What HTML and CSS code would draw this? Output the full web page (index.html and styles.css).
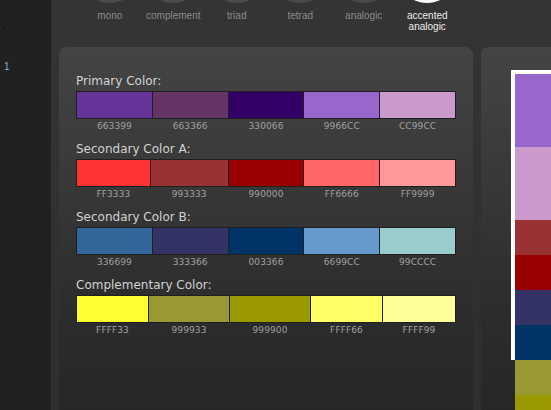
FILE: index.html
```html
<!DOCTYPE html>
<html>
<head>
<meta charset="utf-8">
<link rel="stylesheet" href="styles.css">
</head>
<body>
<div class="app">
  <aside class="sidebar">
    <span class="dot">.</span>
    <span class="num">1</span>
  </aside>
  <main class="main">
    <nav class="modes">
      <div class="mode"><span class="circle"></span><span class="mlabel">mono</span></div>
      <div class="mode"><span class="circle"></span><span class="mlabel">complement</span></div>
      <div class="mode"><span class="circle"></span><span class="mlabel">triad</span></div>
      <div class="mode"><span class="circle"></span><span class="mlabel">tetrad</span></div>
      <div class="mode"><span class="circle"></span><span class="mlabel">analogic</span></div>
      <div class="mode active"><span class="circle"></span><span class="mlabel">accented<br>analogic</span></div>
    </nav>
    <div class="panels">
      <section class="panel scheme">
        <div class="group">
          <h3 class="glabel">Primary Color:</h3>
          <div class="swatches even">
            <span class="sw" style="background:#663399"></span>
            <span class="sw" style="background:#663366"></span>
            <span class="sw" style="background:#330066"></span>
            <span class="sw" style="background:#9966CC"></span>
            <span class="sw" style="background:#CC99CC"></span>
          </div>
          <div class="codes even">
            <span>663399</span><span>663366</span><span>330066</span><span>9966CC</span><span>CC99CC</span>
          </div>
        </div>
        <div class="group">
          <h3 class="glabel">Secondary Color A:</h3>
          <div class="swatches cols-a">
            <span class="sw" style="background:#FF3333"></span>
            <span class="sw" style="background:#993333"></span>
            <span class="sw" style="background:#990000"></span>
            <span class="sw" style="background:#FF6666"></span>
            <span class="sw" style="background:#FF9999"></span>
          </div>
          <div class="codes cols-a">
            <span>FF3333</span><span>993333</span><span>990000</span><span>FF6666</span><span>FF9999</span>
          </div>
        </div>
        <div class="group">
          <h3 class="glabel">Secondary Color B:</h3>
          <div class="swatches even">
            <span class="sw" style="background:#336699"></span>
            <span class="sw" style="background:#333366"></span>
            <span class="sw" style="background:#003366"></span>
            <span class="sw" style="background:#6699CC"></span>
            <span class="sw" style="background:#99CCCC"></span>
          </div>
          <div class="codes even">
            <span>336699</span><span>333366</span><span>003366</span><span>6699CC</span><span>99CCCC</span>
          </div>
        </div>
        <div class="group">
          <h3 class="glabel">Complementary Color:</h3>
          <div class="swatches cols-c">
            <span class="sw" style="background:#FFFF33"></span>
            <span class="sw" style="background:#999933"></span>
            <span class="sw" style="background:#999900"></span>
            <span class="sw" style="background:#FFFF66"></span>
            <span class="sw" style="background:#FFFF99"></span>
          </div>
          <div class="codes cols-c">
            <span>FFFF33</span><span>999933</span><span>999900</span><span>FFFF66</span><span>FFFF99</span>
          </div>
        </div>
      </section>
      <section class="panel preview">
        <div class="frame">
          <span class="stripe tall" style="background:#9966CC"></span>
          <span class="stripe tall" style="background:#CC99CC"></span>
          <span class="stripe" style="background:#993333"></span>
          <span class="stripe" style="background:#990000"></span>
          <span class="stripe" style="background:#333366"></span>
          <span class="stripe" style="background:#003366"></span>
        </div>
        <div class="tail">
          <span class="stripe" style="background:#999933"></span>
          <span class="stripe" style="background:#999900"></span>
        </div>
      </section>
    </div>
  </main>
</div>
</body>
</html>
```
FILE: styles.css
```css
* { box-sizing: border-box; }
html, body {
  margin: 0;
  padding: 0;
  width: 551px;
  height: 410px;
  overflow: hidden;
  background: #333;
  font-family: "DejaVu Sans", sans-serif;
}
.app {
  display: flex;
  height: 410px;
  overflow: hidden;
}
.sidebar {
  width: 51px;
  flex: none;
  background: #212121;
  display: flex;
  flex-direction: column;
  padding-left: 2px;
}
.dot {
  color: #000;
  font-size: 10px;
  line-height: 10px;
  margin-top: 20px;
}
.num {
  color: #8aaed0;
  font-family: "Liberation Sans", sans-serif;
  font-size: 10px;
  line-height: 12px;
  margin-top: 31px;
  padding-left: 2px;
}
.main {
  flex: 1;
  min-width: 0;
  padding-left: 8px;
  background: linear-gradient(#343434, #2e2e2e);
  overflow: hidden;
}
.modes {
  display: flex;
  height: 47px;
  margin-left: 19px;
  align-items: flex-start;
}
.mode {
  width: 63.5px;
  flex: none;
  display: flex;
  flex-direction: column;
  align-items: center;
}
.circle {
  width: 60px;
  height: 60px;
  border-radius: 50%;
  background: #4b4b4b;
  margin-top: -57px;
}
.mlabel {
  margin-top: 7px;
  font-family: "Liberation Sans", sans-serif;
  font-size: 10px;
  line-height: 11px;
  color: #8a8a8a;
  text-align: center;
  white-space: nowrap;
}
.mode.active .circle { background: #fff; }
.mode.active .mlabel { color: #ececec; }
.panels {
  display: flex;
  gap: 8px;
}
.panel {
  border-radius: 8px 8px 0 0;
  height: 380px;
  background: linear-gradient(#444444 0%, #3a3a3a 30%, #2c2c2c 70%, #262626 100%);
}
.scheme {
  width: 414px;
  flex: none;
  padding: 27px 17px 0 17px;
}
.group {
  margin-bottom: 10px;
}
.glabel {
  margin: 0;
  font-weight: normal;
  font-size: 12px;
  line-height: 14px;
  color: #d2d2d2;
}
.swatches {
  margin-top: 3px;
  display: grid;
  height: 28px;
  padding: 1px;
  gap: 1px;
  background: #1f1f1f;
  width: 380px;
}
.sw { display: block; }
.codes {
  display: grid;
  margin-top: 2px;
  padding: 0 1px;
  column-gap: 1px;
  width: 380px;
  font-size: 9px;
  line-height: 11px;
  color: #a0a0a0;
  text-align: center;
  letter-spacing: 0.1px;
}
.even { grid-template-columns: repeat(5, 1fr); }
.cols-a { grid-template-columns: 73fr 77fr 75fr 75fr 75fr; }
.cols-c { grid-template-columns: 71fr 80fr 80fr 71fr 72fr; }
.preview {
  flex: 1;
  min-width: 0;
  overflow: hidden;
  border-top-right-radius: 0;
  padding: 23px 0 0 30px;
}
.frame {
  border-top: 4px solid #fff;
  border-left: 4px solid #fff;
  display: flex;
  flex-direction: column;
}
.tail {
  margin-left: 4px;
  display: flex;
  flex-direction: column;
}
.stripe {
  display: block;
  height: 35px;
}
.stripe.tall { height: 73px; }
```
